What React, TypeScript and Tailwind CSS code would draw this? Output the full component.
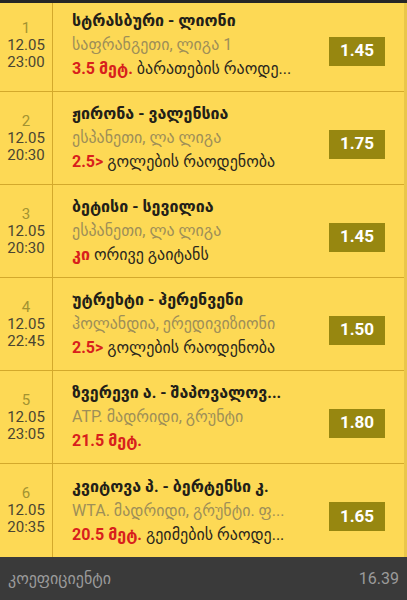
const rows = [
  {
    n: "1",
    date: "12.05",
    time: "23:00",
    title: "სტრასბური - ლიონი",
    league: "საფრანგეთი, ლიგა 1",
    red: "3.5 მეტ.",
    rest: " ბარათების რაოდე...",
    odd: "1.45",
  },
  {
    n: "2",
    date: "12.05",
    time: "20:30",
    title: "ჟირონა - ვალენსია",
    league: "ესპანეთი, ლა ლიგა",
    red: "2.5>",
    rest: " გოლების რაოდენობა",
    odd: "1.75",
  },
  {
    n: "3",
    date: "12.05",
    time: "20:30",
    title: "ბეტისი - სევილია",
    league: "ესპანეთი, ლა ლიგა",
    red: "კი",
    rest: " ორივე გაიტანს",
    odd: "1.45",
  },
  {
    n: "4",
    date: "12.05",
    time: "22:45",
    title: "უტრეხტი - ჰერენვენი",
    league: "ჰოლანდია, ერედივიზიონი",
    red: "2.5>",
    rest: " გოლების რაოდენობა",
    odd: "1.50",
  },
  {
    n: "5",
    date: "12.05",
    time: "23:05",
    title: "ზვერევი ა. - შაპოვალოვ...",
    league: "ATP. მადრიდი, გრუნტი",
    red: "21.5 მეტ.",
    rest: "",
    odd: "1.80",
  },
  {
    n: "6",
    date: "12.05",
    time: "20:35",
    title: "კვიტოვა პ. - ბერტენსი კ.",
    league: "WTA. მადრიდი, გრუნტი. ფ...",
    red: "20.5 მეტ.",
    rest: " გეიმების რაოდე...",
    odd: "1.65",
  },
];

export default function App() {
  return (
    <div
      className="flex flex-col w-[407px] h-[600px] overflow-hidden bg-[#2b2b2b]"
      style={{ fontFamily: "Roboto, 'DejaVu Sans', sans-serif" }}
    >
      <div className="h-[3px] bg-[#262626]" />
      <div className="flex-1 flex flex-col bg-[#fdd955] border-r-[3px] border-[#eac64a] overflow-hidden">
        {rows.map((r, i) => (
          <div
            key={r.n}
            className={`flex border-b border-[#d3a92c] ${i === 0 ? "h-[89px]" : "h-[93px]"} ${i === 5 ? "border-b-0" : ""}`}
          >
            <div
              className={`w-[53px] shrink-0 border-r border-[#d3a92c] flex flex-col items-center justify-center text-[15px] leading-[17px] ${i === 0 ? "pb-[4px]" : ""}`}
            >
              <span className="text-[#a39331]">{r.n}</span>
              <span className="text-[#4a4532]">{r.date}</span>
              <span className="text-[#4a4532]">{r.time}</span>
            </div>
            <div className={`flex-1 flex items-center pl-[19px] pr-[19px] ${i === 0 ? "pb-[4px]" : ""}`}>
              <div className="flex-1 flex flex-col min-w-0">
                <div className="text-[16px] leading-[24px] font-bold text-[#222018] whitespace-nowrap">
                  {r.title}
                </div>
                <div className="text-[16px] leading-[24px] text-[#9e8f58] whitespace-nowrap">
                  {r.league}
                </div>
                <div className="text-[16px] leading-[24px] text-[#2a271d] whitespace-nowrap">
                  <span className="text-[#d8201c] font-bold">{r.red}</span>
                  {r.rest}
                </div>
              </div>
              <div className="w-[56px] h-[29px] mt-[12px] bg-[#978710] flex items-center justify-center text-white font-bold text-[17px]">
                {r.odd}
              </div>
            </div>
          </div>
        ))}
      </div>
      <div className="h-[43px] bg-[#3a3a3a] flex items-center justify-between px-[8px] text-[16px] text-[#9b9b9b]">
        <span>კოეფიციენტი</span>
        <span>16.39</span>
      </div>
    </div>
  );
}
